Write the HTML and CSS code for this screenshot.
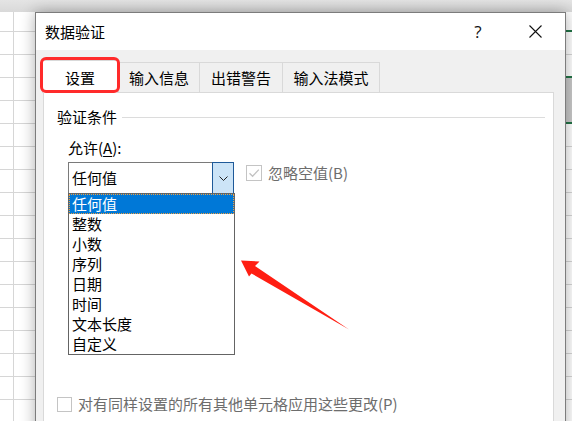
FILE: index.html
```html
<!DOCTYPE html>
<html lang="zh-CN">
<head>
<meta charset="utf-8">
<title>数据验证</title>
<link rel="stylesheet" href="styles.css">
</head>
<body>
<div class="dialog">
  <div class="titlebar">
    <span class="title">数据验证</span>
    <span class="help">?</span>
    <span class="close">
      <svg width="13" height="13" viewBox="0 0 13 13"><path d="M0.5 0.5L12.5 12.5M12.5 0.5L0.5 12.5" stroke="#111" stroke-width="1.1" fill="none"/></svg>
    </span>
  </div>
  <div class="dlg-body">
    <div class="tabs">
      <div class="tab active">设置</div>
      <div class="tab w82">输入信息</div>
      <div class="tab w83">出错警告</div>
      <div class="tab w97">输入法模式</div>
      <div class="mark"></div>
    </div>
    <div class="panel">
      <div class="group-title"><span>验证条件</span><i class="rule"></i></div>
      <div class="label">允许(<u>A</u>):</div>
      <div class="allow-row">
        <div class="combo">
          <span class="combo-value">任何值</span>
          <span class="combo-btn">
            <svg width="9" height="5" viewBox="0 0 9 5"><path d="M0.5 0.5L4.5 4.5L8.5 0.5" stroke="#222" stroke-width="1" fill="none"/></svg>
          </span>
          <ul class="listbox">
            <li class="selected">任何值</li>
            <li>整数</li>
            <li>小数</li>
            <li>序列</li>
            <li>日期</li>
            <li>时间</li>
            <li>文本长度</li>
            <li>自定义</li>
          </ul>
        </div>
        <div class="check">
          <span class="box">
            <svg width="14" height="14" viewBox="0 0 14 14"><path d="M2.5 7.2L5.6 10.3L11.8 3.6" stroke="#c2c2c2" stroke-width="1.3" fill="none"/></svg>
          </span>
          <span class="check-text">忽略空值(B)</span>
        </div>
      </div>
      <div class="check apply">
        <span class="box small"></span>
        <span class="check-text">对有同样设置的所有其他单元格应用这些更改(P)</span>
      </div>
    </div>
  </div>
  <svg class="arrow" width="529" height="417" viewBox="36 13 529 417">
    <polygon points="241,260.5 259.5,261.5 255,266 349,329.5 251.5,273.5 249,276.5" fill="#ff1e12"/>
  </svg>
</div>
</body>
</html>
```

FILE: styles.css
```css
html, body {
  margin: 0;
  padding: 0;
}

body {
  width: 572px;
  height: 421px;
  overflow: hidden;
  font-family: "Noto Sans CJK SC", "Microsoft YaHei", sans-serif;
  color: #000;
  background-color: #fff;
  background-image:
    linear-gradient(#e4e4e4, #d9d9d9),
    linear-gradient(#217346, #217346),
    linear-gradient(#217346, #217346),
    linear-gradient(#217346, #217346),
    linear-gradient(#c9c9c9, #c9c9c9),
    repeating-linear-gradient(to bottom, transparent 0 22px, #d6d6d6 22px 23px),
    repeating-linear-gradient(to right, transparent 0 79px, #d6d6d6 79px 80px);
  background-size:
    100% 12px,
    6px 2px,
    6px 2px,
    6px 2px,
    6px 45px,
    auto,
    auto;
  background-position:
    0 0,
    right 0 top 30px,
    right 0 top 76px,
    right 0 top 122px,
    right 0 top 78px,
    0 9px,
    -66px 0;
  background-repeat:
    no-repeat,
    no-repeat,
    no-repeat,
    no-repeat,
    no-repeat,
    repeat,
    repeat;
}

/* dialog window */
.dialog {
  position: relative;
  box-sizing: border-box;
  width: 531px;
  height: 430px;
  margin: 12px 0 0 35px;
  border: 1px solid #7c7c7c;
  background: #f0f0f0;
  box-shadow: 0 0 14px rgba(0, 0, 0, 0.32);
}

.titlebar {
  display: flex;
  align-items: center;
  height: 37px;
  padding-left: 9px;
  padding-right: 7px;
  background: #fff;
}

.title {
  flex: 1;
  font-size: 15px;
  line-height: 20px;
}

.help {
  width: 46px;
  text-align: center;
  font-family: "Open Sans", "Noto Sans", sans-serif;
  font-size: 17px;
  line-height: 20px;
  color: #111;
}

.close {
  display: flex;
  justify-content: center;
  align-items: center;
  width: 46px;
  margin-left: 11px;
}

.dlg-body {
  padding-top: 12px;
}

/* tab strip */
.tabs {
  position: relative;
  display: flex;
  align-items: flex-start;
  height: 30px;
  padding-left: 6px;
}

.tab {
  box-sizing: border-box;
  height: 30px;
  border-top: 1px solid #d9d9d9;
  border-right: 1px solid #d9d9d9;
  text-align: center;
  font-size: 15px;
  line-height: 30px;
  background: #f0f0f0;
}

.tab.w82 { width: 82px; border-left: 1px solid #d9d9d9; }
.tab.w83 { width: 83px; }
.tab.w97 { width: 97px; }

.tab.active {
  position: relative;
  z-index: 1;
  width: 76px;
  height: 33px;
  margin-top: -2px;
  padding-top: 2px;
  border: 1px solid #d9d9d9;
  border-bottom: none;
  background: #fff;
}

.mark {
  position: absolute;
  left: 4px;
  top: -5px;
  z-index: 2;
  box-sizing: border-box;
  width: 80px;
  height: 36px;
  border: 3px solid #ff2a2a;
  border-radius: 6px;
}

/* settings page */
.panel {
  box-sizing: border-box;
  height: 340px;
  margin: 0 11px 0 7px;
  border: 1px solid #d9d9d9;
  background: #fff;
}

.group-title {
  display: flex;
  align-items: center;
  padding: 14px 8px 0 13px;
  font-size: 15px;
  line-height: 20px;
}

.rule {
  flex: 1;
  height: 1px;
  margin-left: 5px;
  background: #dcdcdc;
}

.label {
  margin-top: 11px;
  padding-left: 24px;
  font-size: 15px;
  line-height: 20px;
}

.label u {
  text-underline-offset: 2px;
}

.allow-row {
  display: flex;
  align-items: flex-start;
  margin-top: 4px;
  padding-left: 24px;
}

.combo {
  position: relative;
  box-sizing: border-box;
  width: 166px;
  height: 32px;
  border: 1px solid #7a7a7a;
  background: #fff;
}

.combo-value {
  display: block;
  padding-left: 3px;
  font-size: 15px;
  line-height: 30px;
}

.combo-btn {
  position: absolute;
  right: -1px;
  top: -1px;
  box-sizing: border-box;
  display: flex;
  justify-content: center;
  align-items: center;
  width: 22px;
  height: 32px;
  border: 1px solid #1f5a99;
  background: #cce4f7;
}

.listbox {
  position: absolute;
  left: -1px;
  top: 30px;
  z-index: 3;
  box-sizing: border-box;
  width: 167px;
  margin: 0;
  padding: 0;
  list-style: none;
  border: 1px solid #646464;
  background: #fff;
}

.listbox li {
  height: 20px;
  padding-left: 3px;
  font-size: 15px;
  line-height: 20px;
}

.listbox li.selected {
  background: #0078d7;
  color: #fff;
  outline: 1px dotted #f0a040;
  outline-offset: -1px;
}

.check {
  display: flex;
  align-items: center;
  margin-left: 12px;
  margin-top: 1px;
}

.box {
  box-sizing: border-box;
  display: flex;
  justify-content: center;
  align-items: center;
  width: 16px;
  height: 16px;
  border: 1px solid #c4c4c4;
  background: #fff;
}

.box.small {
  width: 15px;
  height: 15px;
}

.check-text {
  margin-left: 6px;
  font-size: 15px;
  line-height: 20px;
  color: #6d6d6d;
}

.check.apply {
  margin: 200px 0 0 0;
  padding-left: 13px;
}

/* annotation pointing at the list */
.arrow {
  position: absolute;
  left: 0;
  top: 0;
  z-index: 4;
  pointer-events: none;
}
```
